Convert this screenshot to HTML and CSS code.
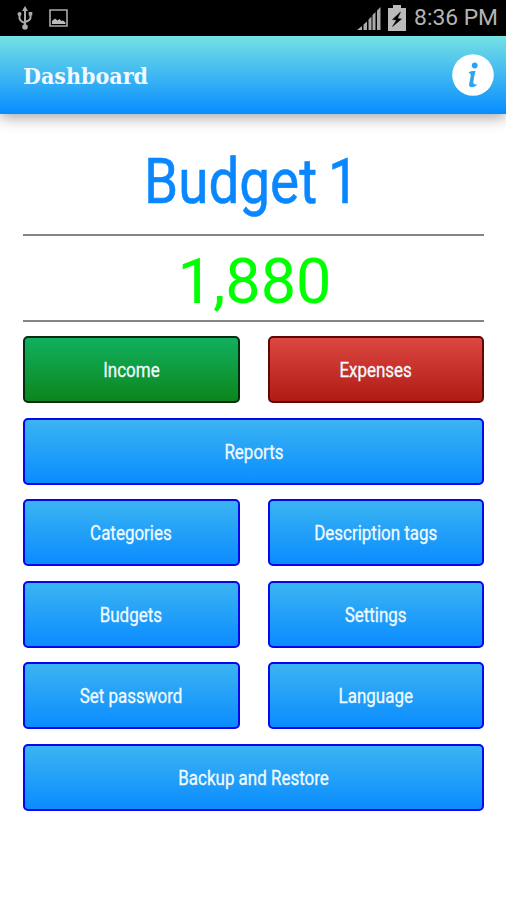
FILE: index.html
```html
<!DOCTYPE html>
<html lang="en">
<head>
    <meta charset="UTF-8">
    <meta name="viewport" content="width=device-width, initial-scale=1.0">
    <title>Dashboard</title>
    <link rel="stylesheet" href="styles.css">
</head>
<body>

<div class="statusbar">
    <svg class="usb" width="16" height="24" viewBox="0 0 16 24">
        <path d="M8 3v17M2.500 8.500v3.500q0 3 5.500 5M13.500 8.500v3q0 3-5.500 4.500" fill="none" stroke="#aaa" stroke-width="2"/>
        <path d="M8 0l3 5H5z" fill="#aaa"/>
        <circle cx="2.500" cy="8" r="2" fill="#aaa"/>
        <path d="M11.700 6h3.600v3.600h-3.600z" fill="#aaa"/>
        <circle cx="8" cy="21" r="2.800" fill="#aaa"/>
    </svg>
    <svg class="picture" width="20" height="18" viewBox="0 0 20 18">
        <path d="M1 1h17v16H1z" fill="none" stroke="#aaa" stroke-width="1.600"/>
        <path d="M3 15v-3l3-2.500 2.500 2 2-1.500 2 2 1.500-.500 2.500 2V15z" fill="#bbb"/>
    </svg>
    <div class="spacer"></div>
    <svg class="signal" width="24" height="24" viewBox="0 0 24 24">
        <path d="M0 24l5-4v4zM6.500 18.500l3.500-3V24H6.500zM11.500 13.500l3-3V24h-3zM15.500 9l3-3v18h-3zM20 4.500L23.500 1v23H20z" fill="#aaa"/>
    </svg>
    <svg class="battery" width="18" height="26" viewBox="0 0 18 26">
        <path d="M5 0h8v3h5v23H0V3h5z" fill="#bbb"/>
        <path d="M12.500 7L4.500 14.500l4 .5-4 6.500 9-7.500-4-.5z" fill="#000" stroke="#000" stroke-width=".5"/>
    </svg>
    <span class="clock">8:36 PM</span>
</div>

<div class="header">
    <h1><span>Dashboard</span></h1>
    <svg class="info" width="42" height="42" viewBox="0 0 42 42">
        <circle cx="21" cy="21" r="20.800" fill="#fff"/>
        <circle cx="22.700" cy="11.500" r="2.900" fill="#2da4ee"/>
        <path d="M16.500 18.300q3-1.700 7-1.300-1.500 5.500-2.200 11.500 0 2.500 4 1.700-2 3-5.500 3-3.500-.2-2.500-4l1.500-7.500q.3-2.200-2.300-3.400z" fill="#2da4ee"/>
    </svg>
</div>

<div class="content">
    <h2 class="title"><span>Budget 1</span></h2>
    <div class="balance"><span>1,880</span></div>
    <div class="buttons">
        <button class="income"><span>Income</span></button>
        <button class="expenses"><span>Expenses</span></button>
        <button class="wide"><span>Reports</span></button>
        <button><span>Categories</span></button>
        <button><span>Description tags</span></button>
        <button><span>Budgets</span></button>
        <button><span>Settings</span></button>
        <button><span>Set password</span></button>
        <button><span>Language</span></button>
        <button class="wide"><span>Backup and Restore</span></button>
    </div>
</div>

</body>
</html>
```
FILE: styles.css
```css
* {
  box-sizing: border-box;
}
body {
  margin: 0;
  height: 900px;
  overflow: hidden;
  background-color: #fff;
  font-family: Roboto, "Liberation Sans", sans-serif;
}
.statusbar {
  display: flex;
  align-items: center;
  height: 36px;
  padding: 0 8px 0 17px;
  background-color: #000;
}
.picture {
  margin-left: 16px;
}
.spacer {
  flex: 1;
}
.signal {
  margin-right: 7px;
}
.battery {
  margin-right: 8px;
  margin-bottom: 1px;
}
.clock {
  font-size: 22.800px;
  line-height: 36px;
  color: #b4b4b4;
}
.header {
  display: flex;
  align-items: center;
  justify-content: space-between;
  height: 78px;
  padding: 0 12px 0 23px;
  background: linear-gradient(#76e1e4, #078dff);
  box-shadow: 0 3px 14px rgba(0, 0, 0, .38);
}
h1 {
  margin: 2px 0 0;
  font-family: "DejaVu Serif", serif;
  font-size: 22px;
  line-height: 30px;
  color: #f0faff;
}
h1 span {
  display: inline-block;
  transform: scaleX(.94);
  transform-origin: left;
}
.content {
  padding: 0 22px 0 23px;
}
.title {
  margin: 0;
  height: 122px;
  padding: 9px 4px 0 0;
  border-bottom: 2px solid #858585;
  font-size: 63px;
  font-weight: 400;
  line-height: 118px;
  text-align: center;
  color: #0a87ff;
}
.title span {
  display: inline-block;
  word-spacing: -3px;
  -webkit-text-stroke: .6px #0a87ff;
  transform: scaleX(.87);
}
.balance {
  height: 86px;
  padding-left: 2px;
  border-bottom: 2px solid #858585;
  font-size: 63px;
  line-height: 91px;
  text-align: center;
  color: #00ff00;
}
.buttons {
  display: grid;
  grid-template-columns: 1fr 1fr;
  gap: 14.600px 28px;
  margin-top: 14px;
}
button {
  height: 67px;
  padding: 2px 0 0;
  border: 2px solid #0505f0;
  border-radius: 5px;
  background: linear-gradient(#3bb4f2, #0a8cff);
  font-family: inherit;
  font-size: 19.500px;
  color: #f0faff;
}
button span {
  display: inline-block;
  -webkit-text-stroke: .3px #f0faff;
  transform: scaleX(.87);
}
.wide {
  grid-column: span 2;
}
.income {
  border-color: #052b12;
  background: linear-gradient(#11b05f, #0c861c);
}
.expenses {
  border-color: #620707;
  background: linear-gradient(#dc4741, #b01b14);
}
```
